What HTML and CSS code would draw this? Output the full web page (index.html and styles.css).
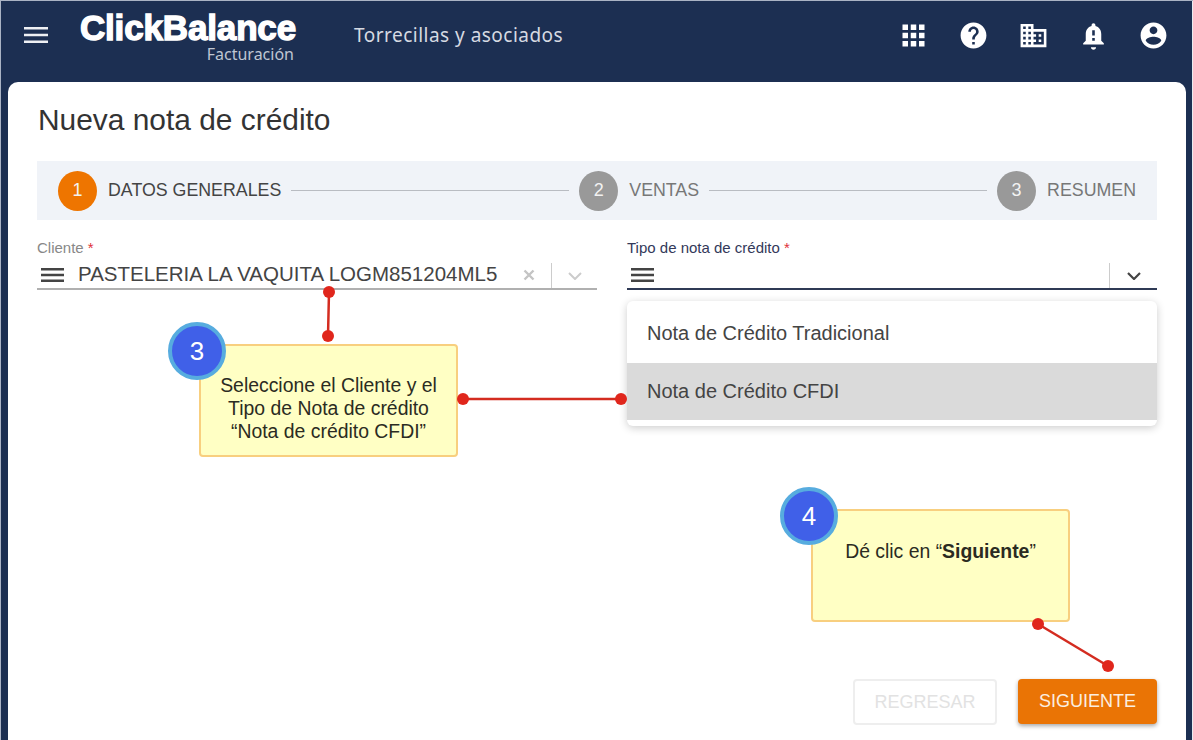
FILE: index.html
```html
<!DOCTYPE html>
<html lang="es">
<head>
<meta charset="utf-8">
<title>Nueva nota de crédito</title>
<link rel="stylesheet" href="styles.css">
</head>
<body>
<div class="app">
  <header class="topbar">
    <svg class="menu-icon" viewBox="0 0 24 18"><path d="M0 1h24v2.4H0zM0 7.8h24v2.4H0zM0 14.6h24V17H0z"/></svg>
    <div class="logo">
      <span class="logo-name">ClickBalance</span>
      <span class="logo-sub">Facturación</span>
    </div>
    <span class="company">Torrecillas y asociados</span>
    <nav class="top-icons">
      <span class="top-icon"><svg class="i-apps" viewBox="0 0 24 24"><path d="M4 8h4V4H4v4zm6 12h4v-4h-4v4zm-6 0h4v-4H4v4zm0-6h4v-4H4v4zm6 0h4v-4h-4v4zm6-10v4h4V4h-4zm-6 4h4V4h-4v4zm6 6h4v-4h-4v4zm0 6h4v-4h-4v4z"/></svg></span>
      <span class="top-icon"><svg class="i-help" viewBox="0 0 24 24"><path d="M12 2C6.48 2 2 6.48 2 12s4.48 10 10 10 10-4.48 10-10S17.52 2 12 2zm1 17h-2v-2h2v2zm2.07-7.75l-.9.92C13.45 12.9 13 13.5 13 15h-2v-.5c0-1.1.45-2.1 1.17-2.83l1.24-1.26c.37-.36.59-.86.59-1.41 0-1.1-.9-2-2-2s-2 .9-2 2H8c0-2.21 1.79-4 4-4s4 1.79 4 4c0 .88-.36 1.68-.93 2.25z"/></svg></span>
      <span class="top-icon"><svg class="i-help" viewBox="0 0 24 24"><path d="M12 7V3H2v18h20V7H12zM6 19H4v-2h2v2zm0-4H4v-2h2v2zm0-4H4V9h2v2zm0-4H4V5h2v2zm4 12H8v-2h2v2zm0-4H8v-2h2v2zm0-4H8V9h2v2zm0-4H8V5h2v2zm10 12h-8v-2h2v-2h-2v-2h2v-2h-2V9h8v10zm-2-8h-2v2h2v-2zm0 4h-2v2h2v-2z"/></svg></span>
      <span class="top-icon"><svg class="i-help" viewBox="0 0 24 24"><path d="M10.01 21.01c0 1.1.89 1.99 1.99 1.99s1.99-.89 1.99-1.99h-3.98zM18 16v-5c0-3.07-1.63-5.64-4.5-6.32V4c0-.83-.67-1.5-1.5-1.5s-1.5.67-1.5 1.5v.68C7.64 5.36 6 7.92 6 11v5l-2 2v1h16v-1l-2-2zm-5 0h-2v-2h2v2zm0-4h-2V8h2v4z"/></svg></span>
      <span class="top-icon"><svg class="i-help" viewBox="0 0 24 24"><path d="M12 2C6.48 2 2 6.48 2 12s4.48 10 10 10 10-4.48 10-10S17.52 2 12 2zm0 3c1.66 0 3 1.34 3 3s-1.34 3-3 3-3-1.34-3-3 1.34-3 3-3zm0 14.2c-2.5 0-4.71-1.28-6-3.22.03-1.99 4-3.08 6-3.08 1.99 0 5.97 1.09 6 3.08-1.29 1.94-3.5 3.22-6 3.22z"/></svg></span>
    </nav>
  </header>

  <main class="card">
    <h1 class="title">Nueva nota de crédito</h1>

    <ol class="stepper">
      <li class="step step-active"><span class="step-num">1</span><span class="step-label">DATOS GENERALES</span></li>
      <li class="step-line"></li>
      <li class="step"><span class="step-num">2</span><span class="step-label">VENTAS</span></li>
      <li class="step-line"></li>
      <li class="step"><span class="step-num">3</span><span class="step-label">RESUMEN</span></li>
    </ol>

    <section class="fields">
      <div class="field">
        <label class="field-label">Cliente <span class="req">*</span></label>
        <div class="control">
          <svg class="lines" viewBox="0 0 23 14"><path d="M0 0h23v2.4H0zM0 5.8h23v2.4H0zM0 11.6h23V14H0z"/></svg>
          <span class="value">PASTELERIA LA VAQUITA LOGM851204ML5</span>
          <svg class="clear" viewBox="0 0 12 12"><path d="M1.5 1.5l9 9M10.5 1.5l-9 9"/></svg>
          <span class="sep"></span>
          <svg class="chev" viewBox="0 0 14 8"><path d="M1 1l6 6 6-6"/></svg>
        </div>
      </div>
      <div class="field field-open">
        <label class="field-label">Tipo de nota de crédito <span class="req">*</span></label>
        <div class="control">
          <svg class="lines" viewBox="0 0 23 14"><path d="M0 0h23v2.4H0zM0 5.8h23v2.4H0zM0 11.6h23V14H0z"/></svg>
          <span class="value"></span>
          <span class="sep"></span>
          <svg class="chev" viewBox="0 0 14 8"><path d="M1 1l6 6 6-6"/></svg>
        </div>
        <ul class="menu">
          <li class="menu-item">Nota de Crédito Tradicional</li>
          <li class="menu-item menu-item-on">Nota de Crédito CFDI</li>
        </ul>
      </div>
    </section>

    <footer class="actions">
      <button class="btn btn-off" type="button">REGRESAR</button>
      <button class="btn btn-on" type="button">SIGUIENTE</button>
    </footer>
  </main>

  <svg class="connectors" viewBox="0 0 1193 740">
    <path d="M329 292L328 336M463 399H621M1038 624L1108 666"/>
    <circle cx="329" cy="292" r="6"/><circle cx="328" cy="336" r="6"/>
    <circle cx="463" cy="399" r="6"/><circle cx="621" cy="399" r="6"/>
    <circle cx="1038" cy="624" r="6"/><circle cx="1108" cy="666" r="6"/>
  </svg>

  <aside class="note note-3">
    <span class="badge">3</span>
    <p class="note-text">Seleccione el Cliente y el<br>Tipo de Nota de crédito<br>“Nota de crédito CFDI”</p>
  </aside>
  <aside class="note note-4">
    <span class="badge">4</span>
    <p class="note-text">Dé clic en “<b>Siguiente</b>”</p>
  </aside>
</div>
</body>
</html>
```
FILE: styles.css
```css
* { box-sizing: border-box; }
html, body { margin: 0; height: 100%; overflow: hidden; }
body { font-family: "Liberation Sans", Arial, sans-serif; background: #1c2f52; }

.app { position: relative; width: 1193px; height: 740px; display: flex; flex-direction: column; background: #1c2f52; box-shadow: inset 1px 1px 0 #aab3c4, inset -1px 0 0 #e8ebf0; }

.topbar { height: 82px; flex: none; display: flex; align-items: center; color: #fff; padding-left: 24px; padding-right: 10px; }
.menu-icon { width: 24px; height: 18px; fill: #eef0f4; margin-top: -12px; flex: none; }
.logo { display: flex; flex-direction: column; align-items: flex-end; width: 216px; margin-left: 32px; margin-top: -7px; }
.logo-name { font-size: 35px; font-weight: 700; line-height: 32px; color: #fff; -webkit-text-stroke: 1.4px #fff; letter-spacing: -.15px; white-space: nowrap; }
.logo-sub { font-family: "Noto Sans", sans-serif; font-size: 16px; line-height: 20px; color: #bfc6d2; margin-right: 2px; }
.company { font-family: "Noto Sans", sans-serif; font-size: 19px; color: #d6dae2; margin-left: 58px; margin-top: -12px; letter-spacing: .48px; white-space: nowrap; }
.top-icons { margin-left: auto; display: flex; margin-top: -12px; }
.top-icon { width: 60px; height: 36px; display: flex; align-items: center; justify-content: center; }
.top-icon svg { fill: #fff; }
.i-apps { width: 33px; height: 33px; }
.i-help { width: 31px; height: 31px; }

.card { flex: 1; margin: 0 7px 0 8px; padding: 18px 29px 15px; background: #fff; border-radius: 10px 10px 0 0; display: flex; flex-direction: column; }
.title { margin: 0 0 21px; font-size: 29.9px; font-weight: 400; line-height: 40px; color: #333; height: 40px; padding-left: 1px; }

.stepper { list-style: none; margin: 0; height: 59px; background: #f0f3f8; display: flex; align-items: center; padding: 0 21px; }
.step { display: flex; align-items: center; flex: none; }
.step-num { width: 39px; height: 40px; border-radius: 50%; background: #999; color: #f2f2f2; font-size: 18px; display: flex; align-items: center; justify-content: center; }
.step-label { font-size: 17.8px; line-height: 20px; color: #777; margin-left: 11px; margin-top: -2px; }
.step-active .step-num { background: #ee7500; }
.step-active .step-label { color: #444; }
.step-line { flex: 1; height: 1px; background: #b9bcc2; margin: 0 10px; }

.fields { display: grid; grid-template-columns: 560px 530px; column-gap: 30px; padding-top: 20px; }
.field { position: relative; }
.field-label { display: block; font-size: 15px; line-height: 16px; color: #888; }
.field-open .field-label { color: #33395a; }
.req { color: #e0313a; }
.control { height: 34px; display: flex; align-items: flex-end; border-bottom: 2px solid #b0b0b0; }
.field-open .control { border-bottom-color: #2f3a55; }
.lines { width: 23px; height: 14px; margin-left: 4px; flex: none; fill: #444; margin-bottom: 6px; }
.value { flex: 1; margin-left: 14px; font-size: 20.5px; line-height: 24px; color: #444; white-space: nowrap; margin-bottom: 2px; }
.clear { width: 12px; height: 12px; fill: none; stroke: #c4c4c4; stroke-width: 2.4; flex: none; margin: 0 16px 7px 0; }
.sep { width: 1px; height: 25px; background: #ccc; flex: none; }
.chev { width: 14px; height: 8px; fill: none; stroke: #ccc; stroke-width: 2; flex: none; margin: 0 15px 8px 16px; }
.field-open .chev { stroke: #444; stroke-width: 2.2; margin: 0 16px 8px 17px; }

.menu { position: absolute; left: 0; right: 0; top: 61px; height: 125px; margin: 0; padding: 4px 0 0; list-style: none; background: #fff; border-radius: 6px; box-shadow: 0 2px 8px rgba(0,0,0,.2); z-index: 1; }
.menu-item { height: 58px; display: flex; align-items: center; padding-left: 20px; font-size: 20px; color: #444; padding-bottom: 2px; }
.menu-item-on { height: 57px; background: #dadada; padding-bottom: 0; }

.actions { margin-top: auto; display: flex; justify-content: flex-end; gap: 21px; align-items: flex-start; }
.btn { font-family: inherit; font-size: 18px; height: 46px; border-radius: 4px; padding: 0; }
.btn-off { width: 144px; background: #fff; border: 2px solid #eee; color: #e2e2e2; }
.btn-on { width: 139px; height: 45px; background: #ea7405; border: 0; color: #fbeee0; box-shadow: 0 2px 4px rgba(0,0,0,.35); }

.connectors { position: absolute; left: 0; top: 0; width: 1193px; height: 740px; z-index: 3; pointer-events: none; fill: #e0261c; }
.connectors path { fill: none; stroke: #d42c20; stroke-width: 2.5; }

.note { position: absolute; width: 259px; height: 113px; background: #ffffc4; border: 2.5px solid #f8cf7f; border-radius: 4px; z-index: 2; }
.note-3 { left: 199px; top: 344px; }
.note-4 { left: 811px; top: 509px; }
.note-text { margin: 0; text-align: center; font-size: 19.4px; line-height: 23px; color: #2b2b22; }
.note-3 .note-text { padding-top: 28px; }
.note-4 .note-text { padding-top: 29px; }
.badge { position: absolute; left: -33px; top: -24px; width: 58px; height: 58px; border-radius: 50%; background: #4060e8; border: 4px solid #57acdf; color: #fff; font-size: 26px; display: flex; align-items: center; justify-content: center; }
```
